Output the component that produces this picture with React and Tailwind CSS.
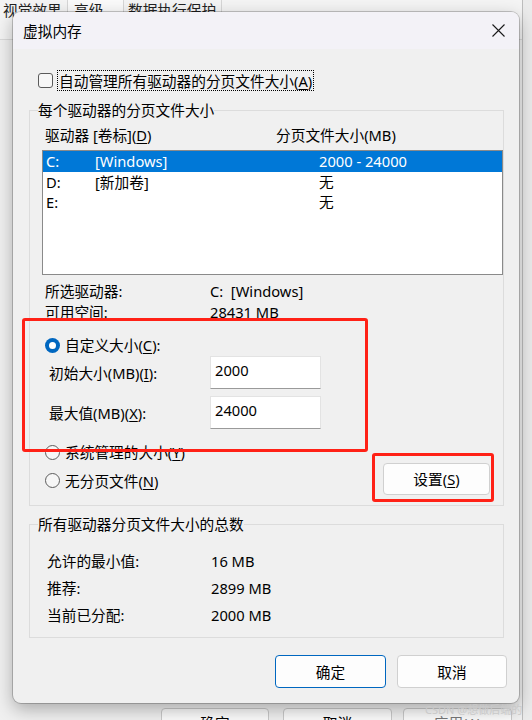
import React from "react";

function Radio({ checked }) {
  return checked ? (
    <span className="w-[15px] h-[15px] rounded-full bg-[#0067c0] flex items-center justify-center shrink-0">
      <span className="w-[7px] h-[7px] rounded-full bg-white" />
    </span>
  ) : (
    <span className="w-[15px] h-[15px] rounded-full border border-[#5c5c5c] bg-[#f6f6f6] shrink-0" />
  );
}

function U({ children }) {
  return <span className="underline underline-offset-[2px] decoration-[1px]">{children}</span>;
}

export default function App() {
  return (
    <div className="relative w-[532px] h-[720px] overflow-hidden bg-[#ebebeb] font-['Noto_Sans','Noto_Sans_CJK_SC',sans-serif] text-[14.7px] text-black leading-[20px]">
      {/* background window */}
      <div className="w-[523px] h-[720px] bg-[#f0f0f0] border-r border-[#bdbdbd] flex flex-col">
        <div className="flex h-[40px] bg-[#f4f4f4] border-b border-[#dadada]">
          <div className="w-[68px] pl-[3px] border-r border-[#d6d6d6] text-[#222]">视觉效果</div>
          <div className="w-[56px] pl-[6px] border-r border-[#d6d6d6] bg-[#fafafa] text-[#222]">高级</div>
          <div className="w-[98px] pl-[4px] border-r border-[#d6d6d6] text-[#222]">数据执行保护</div>
        </div>
        <div className="flex-1" />
        <div className="h-[40px] pt-[28px] flex">
          <div className="ml-[161px] w-[108px] h-[30px] rounded-[4px] border border-[#c9c9c9] bg-[#fbfbfb] flex items-center justify-center">确定</div>
          <div className="ml-[14px] w-[109px] h-[30px] rounded-[4px] border border-[#c9c9c9] bg-[#fbfbfb] flex items-center justify-center">取消</div>
          <div className="ml-[11px] w-[109px] h-[30px] rounded-[4px] border border-[#c9c9c9] bg-[#fbfbfb] flex items-center justify-center text-[#777]">应用(A)</div>
        </div>
      </div>

      {/* dialog */}
      <div className="absolute left-[13px] top-[12px] w-[506px] h-[691px] rounded-[8px] bg-[#f0f0f0] shadow-[0_0_0_1px_rgba(0,0,0,0.2),0_6px_18px_rgba(0,0,0,0.3)] flex flex-col overflow-hidden">
        <div className="h-[37px] bg-[#f3f2f7] flex items-center justify-between shrink-0">
          <div className="pl-[10px]">虚拟内存</div>
          <div className="w-[42px] h-full flex items-center justify-center">
            <svg width="13" height="13" viewBox="0 0 13 13">
              <path d="M0.5 0.5 L12.5 12.5 M12.5 0.5 L0.5 12.5" stroke="#1a1a1a" strokeWidth="1.1" />
            </svg>
          </div>
        </div>

        <div className="flex flex-col pl-[16px] pr-[15px]">
          {/* checkbox */}
          <div className="mt-[21px] ml-[9px] h-[21px] flex items-center">
            <span className="w-[15px] h-[15px] rounded-[3px] border border-[#5a5a5a] bg-[#f7f7f7] shrink-0" />
            <span className="ml-[4px] h-[21px] px-[1px] border border-dotted border-black flex items-center">
              自动管理所有驱动器的分页文件大小(<U>A</U>)
            </span>
          </div>

          {/* group 1 */}
          <fieldset className="mt-[9px] border border-[#dcdcdc] pb-[10px]">
            <legend className="ml-[8px] leading-[20px]">每个驱动器的分页文件大小</legend>
            <div className="mt-[5px] h-[20px] flex pl-[15px]">
              <div className="w-[231px]">驱动器 [卷标](<U>D</U>)</div>
              <div>分页文件大小(MB)</div>
            </div>
            <div className="mt-[5px] ml-[12px] h-[125px] border border-[#8a8a8a] bg-white">
              <div className="h-[20.5px] bg-[#0078d7] text-white grid grid-cols-[49px_224px_1fr] pl-[3px] items-center">
                <span>C:</span>
                <span>[Windows]</span>
                <span>2000 - 24000</span>
              </div>
              <div className="h-[20.5px] grid grid-cols-[49px_224px_1fr] pl-[3px] items-center">
                <span>D:</span>
                <span>[新加卷]</span>
                <span>无</span>
              </div>
              <div className="h-[20.5px] grid grid-cols-[49px_224px_1fr] pl-[3px] items-center">
                <span>E:</span>
                <span></span>
                <span>无</span>
              </div>
            </div>
            <div className="mt-[6px] h-[20px] flex pl-[15px]">
              <div className="w-[165px]">所选驱动器:</div>
              <div>C:&nbsp; [Windows]</div>
            </div>
            <div className="mt-[1px] h-[20px] flex pl-[15px]">
              <div className="w-[165px]">可用空间:</div>
              <div>28431 MB</div>
            </div>
            <div className="mt-[13px] h-[20px] flex items-center pl-[15px] gap-[5px]">
              <Radio checked />
              <span>自定义大小(<U>C</U>):</span>
            </div>
            <div className="mt-[1px] h-[33px] flex items-center pl-[19px]">
              <div className="w-[161px]">初始大小(MB)(<U>I</U>):</div>
              <div className="w-[111px] h-[33px] bg-white border border-[#e3e3e3] border-b-[#9a9a9a] pl-[4px] pt-[3px]">2000</div>
            </div>
            <div className="mt-[7px] h-[33px] flex items-center pl-[19px]">
              <div className="w-[161px]">最大值(MB)(<U>X</U>):</div>
              <div className="w-[111px] h-[33px] bg-white border border-[#e3e3e3] border-b-[#9a9a9a] pl-[4px] pt-[3px]">24000</div>
            </div>
            <div className="mt-[13px] h-[20px] flex items-center pl-[15px] gap-[5px]">
              <Radio />
              <span>系统管理的大小(<U>Y</U>)</span>
            </div>
            <div className="mt-[1px] h-[32px] flex items-center justify-between pl-[15px] pr-[13px]">
              <div className="flex items-center gap-[5px] pt-[3px]">
                <Radio />
                <span>无分页文件(<U>N</U>)</span>
              </div>
              <div className="w-[107px] h-[32px] rounded-[4px] border border-[#d0d0d0] bg-[#fdfdfd] flex items-center justify-center">
                设置(<U>S</U>)
              </div>
            </div>
          </fieldset>

          {/* group 2 */}
          <fieldset className="mt-[8px] border border-[#dcdcdc] pb-[9px]">
            <legend className="ml-[8px] leading-[20px]">所有驱动器分页文件大小的总数</legend>
            <div className="mt-[13px] h-[27px] flex items-center pl-[17px]">
              <div className="w-[164px]">允许的最小值:</div>
              <div>16 MB</div>
            </div>
            <div className="h-[27px] flex items-center pl-[17px]">
              <div className="w-[164px]">推荐:</div>
              <div>2899 MB</div>
            </div>
            <div className="h-[27px] flex items-center pl-[17px]">
              <div className="w-[164px]">当前已分配:</div>
              <div>2000 MB</div>
            </div>
          </fieldset>

          <div className="mt-[17px] -mr-[3px] flex justify-end gap-[11px]">
            <div className="w-[111px] h-[33px] rounded-[4px] border border-[#0067c0] bg-[#fdfdfd] flex items-center justify-center">确定</div>
            <div className="w-[110px] h-[33px] rounded-[4px] border border-[#d0d0d0] bg-[#fdfdfd] flex items-center justify-center">取消</div>
          </div>
        </div>
      </div>

      {/* annotations */}
      <div className="absolute left-[22px] top-[318px] w-[346px] h-[134px] rounded-[3px] border-[3px] border-[#ff2116]" />
      <div className="absolute left-[372px] top-[453px] w-[122px] h-[49px] rounded-[3px] border-[3px] border-[#ff2116]" />

      {/* watermark */}
      <div className="absolute left-[425px] top-[702px] text-[11px] leading-[16px] text-[#c9c9c9] font-['Noto_Sans','Noto_Sans_CJK_SC',sans-serif]">
        CSDN @想做后端的小C
      </div>
    </div>
  );
}
